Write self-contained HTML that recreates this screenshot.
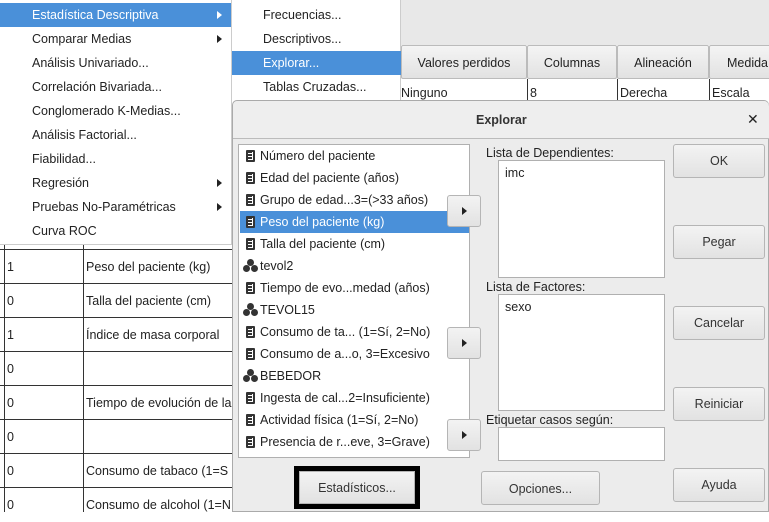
<!DOCTYPE html>
<html><head><meta charset="utf-8"><style>
*{margin:0;padding:0;box-sizing:border-box}
body{width:769px;height:512px;overflow:hidden;position:relative;background:#fff;font-family:"Liberation Sans","DejaVu Sans",sans-serif;font-size:12.5px;color:#222}
.a{position:absolute}
.hl{background:#4a90d9;color:#fff}
.mi{position:absolute;left:0;width:232px;height:24px;line-height:24px;padding-left:32px}
.si{position:absolute;left:232px;width:169px;height:24px;line-height:24px;padding-left:31px}
.arr{position:absolute;right:10px;top:8px;width:0;height:0;border-left:5px solid #222;border-top:4px solid transparent;border-bottom:4px solid transparent}
.hdr{position:absolute;top:45px;height:34px;line-height:34px;text-align:center;background:linear-gradient(#f4f4f4,#e2e2e2);border:1px solid #bbb;border-radius:2px}
.btn{position:absolute;background:linear-gradient(#f3f3f3,#e2e2e2);border:1px solid #b5b5b5;border-radius:3px;text-align:center;color:#333}
.box{position:absolute;background:#fff;border:1px solid #b0b0b0}
.li{position:absolute;left:1px;width:229px;height:22px;line-height:22px;padding-left:20px;white-space:nowrap}
.ic{position:absolute;left:6px;top:5px;width:9px;height:12px;background:#333;border-radius:1px}
.ic:after{content:"";position:absolute;left:2px;top:2px;width:4px;height:8px;border-right:1px solid #fff;background:repeating-linear-gradient(#333 0 1px,#fff 1px 2px,#333 2px 3px)}
.nm{position:absolute;left:3px;top:4px;width:16px;height:13px}
.nm i{position:absolute;width:7px;height:7px;border-radius:50%;background:#333}
.ar{position:absolute;width:34px;height:32px}
.ar:after{content:"";position:absolute;left:14px;top:11px;border-left:5px solid #222;border-top:4px solid transparent;border-bottom:4px solid transparent}
.tr{position:absolute;left:0;width:232px;height:34px;border-bottom:1px solid #333}
</style></head><body>
<!-- background table -->
<div class="a" style="left:401px;top:0;width:368px;height:45px;background:#e8e8e8"></div>
<div class="hdr" style="left:401px;width:126px">Valores perdidos</div>
<div class="hdr" style="left:527px;width:90px">Columnas</div>
<div class="hdr" style="left:617px;width:92px">Alineación</div>
<div class="hdr" style="left:709px;width:70px;text-align:left;padding-left:17px">Medida</div>
<div class="a" style="left:401px;top:79px;width:368px;height:22px;background:#fff"></div>
<div class="a" style="left:401px;top:86px">Ninguno</div>
<div class="a" style="left:527px;top:79px;height:22px;border-left:1px solid #333;padding-left:2px;padding-top:7px">8</div>
<div class="a" style="left:617px;top:79px;height:22px;border-left:1px solid #333;padding-left:2px;padding-top:7px">Derecha</div>
<div class="a" style="left:709px;top:79px;height:22px;border-left:1px solid #333;padding-left:2px;padding-top:7px">Escala</div>
<div class="a" style="left:0;top:244px;width:232px;height:268px;background:#fff">
<div class="a" style="left:4px;top:0;width:1px;height:268px;background:#333"></div>
<div class="a" style="left:83px;top:0;width:1px;height:268px;background:#333"></div>
</div>
<div class="tr" style="top:216px;border-bottom:1px solid #333;height:34px"></div>
<div class="a" style="left:0;top:250px;width:232px">
<div class="tr" style="top:0"><span class="a" style="left:7px;top:10px">1</span><span class="a" style="left:86px;top:10px">Peso del paciente (kg)</span></div>
<div class="tr" style="top:34px"><span class="a" style="left:7px;top:10px">0</span><span class="a" style="left:86px;top:10px">Talla del paciente (cm)</span></div>
<div class="tr" style="top:68px"><span class="a" style="left:7px;top:10px">1</span><span class="a" style="left:86px;top:10px">Índice de masa corporal</span></div>
<div class="tr" style="top:102px"><span class="a" style="left:7px;top:10px">0</span></div>
<div class="tr" style="top:136px"><span class="a" style="left:7px;top:10px">0</span><span class="a" style="left:86px;top:10px;white-space:nowrap">Tiempo de evolución de la</span></div>
<div class="tr" style="top:170px"><span class="a" style="left:7px;top:10px">0</span></div>
<div class="tr" style="top:204px"><span class="a" style="left:7px;top:10px">0</span><span class="a" style="left:86px;top:10px;white-space:nowrap">Consumo de tabaco (1=S</span></div>
<div class="tr" style="top:238px;border:0"><span class="a" style="left:7px;top:10px">0</span><span class="a" style="left:86px;top:10px;white-space:nowrap">Consumo de alcohol (1=N</span></div>
</div>
<div class="a" style="left:4px;top:250px;width:1px;height:262px;background:#333"></div>
<div class="a" style="left:83px;top:250px;width:1px;height:262px;background:#333"></div>
<!-- menu -->
<div class="a" style="left:0;top:0;width:232px;height:245px;background:#fff;border-right:1px solid #ccc;border-bottom:1px solid #ccc;overflow:hidden">
<div class="mi hl" style="top:3px">Estadística Descriptiva<span class="arr" style="border-left-color:#fff"></span></div>
<div class="mi" style="top:27px">Comparar Medias<span class="arr"></span></div>
<div class="mi" style="top:51px">Análisis Univariado...</div>
<div class="mi" style="top:75px">Correlación Bivariada...</div>
<div class="mi" style="top:99px">Conglomerado K-Medias...</div>
<div class="mi" style="top:123px">Análisis Factorial...</div>
<div class="mi" style="top:147px">Fiabilidad...</div>
<div class="mi" style="top:171px">Regresión<span class="arr"></span></div>
<div class="mi" style="top:195px">Pruebas No-Paramétricas<span class="arr"></span></div>
<div class="mi" style="top:219px">Curva ROC</div>
</div>
<div class="a" style="left:232px;top:0;width:169px;height:100px;background:#fff;border-right:1px solid #ccc"></div>
<div class="si" style="top:3px">Frecuencias...</div>
<div class="si" style="top:27px">Descriptivos...</div>
<div class="si hl" style="top:51px">Explorar...</div>
<div class="si" style="top:75px">Tablas Cruzadas...</div>
<!-- dialog -->
<div class="a" style="left:232px;top:100px;width:537px;height:412px;background:#ececec;border:1px solid #aaa;border-radius:5px 5px 0 0">
<div class="a" style="left:0;top:0;width:536px;height:38px;border-bottom:1px solid #bbb;background:#eee;border-radius:5px 5px 0 0"></div>
<div class="a" style="left:243px;top:12px;font-weight:bold;color:#333">Explorar</div>
<div class="a" style="left:514px;top:10px;font-weight:bold;font-size:14px">✕</div>
</div>
<div class="box" style="left:238px;top:144px;width:232px;height:314px;overflow:hidden">
<div class="li" style="top:0"><span class="ic"></span>Número del paciente</div>
<div class="li" style="top:22px"><span class="ic"></span>Edad del paciente (años)</div>
<div class="li" style="top:44px"><span class="ic"></span>Grupo de edad...3=(&gt;33 años)</div>
<div class="li hl" style="top:66px"><span class="ic"></span>Peso del paciente (kg)</div>
<div class="li" style="top:88px"><span class="ic"></span>Talla del paciente (cm)</div>
<div class="li" style="top:110px"><span class="nm"><i style="left:4px;top:0"></i><i style="left:0;top:6px"></i><i style="left:8px;top:6px"></i></span>tevol2</div>
<div class="li" style="top:132px"><span class="ic"></span>Tiempo de evo...medad (años)</div>
<div class="li" style="top:154px"><span class="nm"><i style="left:4px;top:0"></i><i style="left:0;top:6px"></i><i style="left:8px;top:6px"></i></span>TEVOL15</div>
<div class="li" style="top:176px"><span class="ic"></span>Consumo de ta... (1=Sí, 2=No)</div>
<div class="li" style="top:198px"><span class="ic"></span>Consumo de a...o, 3=Excesivo</div>
<div class="li" style="top:220px"><span class="nm"><i style="left:4px;top:0"></i><i style="left:0;top:6px"></i><i style="left:8px;top:6px"></i></span>BEBEDOR</div>
<div class="li" style="top:242px"><span class="ic"></span>Ingesta de cal...2=Insuficiente)</div>
<div class="li" style="top:264px"><span class="ic"></span>Actividad física (1=Sí, 2=No)</div>
<div class="li" style="top:286px"><span class="ic"></span>Presencia de r...eve, 3=Grave)</div>
</div>
<div class="btn ar" style="left:447px;top:195px"></div>
<div class="btn ar" style="left:447px;top:327px"></div>
<div class="btn ar" style="left:447px;top:419px"></div>
<div class="a" style="left:486px;top:146px">Lista de Dependientes:</div>
<div class="box" style="left:498px;top:160px;width:167px;height:118px;padding:5px 6px">imc</div>
<div class="a" style="left:486px;top:280px">Lista de Factores:</div>
<div class="box" style="left:498px;top:294px;width:167px;height:117px;padding:5px 6px">sexo</div>
<div class="a" style="left:486px;top:413px">Etiquetar casos según:</div>
<div class="box" style="left:498px;top:427px;width:167px;height:34px"></div>
<div class="btn" style="left:673px;top:144px;width:92px;height:34px;line-height:32px">OK</div>
<div class="btn" style="left:673px;top:225px;width:92px;height:34px;line-height:32px">Pegar</div>
<div class="btn" style="left:673px;top:306px;width:92px;height:34px;line-height:32px">Cancelar</div>
<div class="btn" style="left:673px;top:387px;width:92px;height:34px;line-height:32px">Reiniciar</div>
<div class="btn" style="left:673px;top:468px;width:92px;height:34px;line-height:32px">Ayuda</div>
<div class="btn" style="left:481px;top:471px;width:119px;height:34px;line-height:34px">Opciones...</div>
<div class="a" style="left:294px;top:466px;width:126px;height:43px;border:5px solid #000"></div>
<div class="btn" style="left:299px;top:471px;width:116px;height:33px;line-height:33px;border-radius:0">Estadísticos...</div>
</body></html>
